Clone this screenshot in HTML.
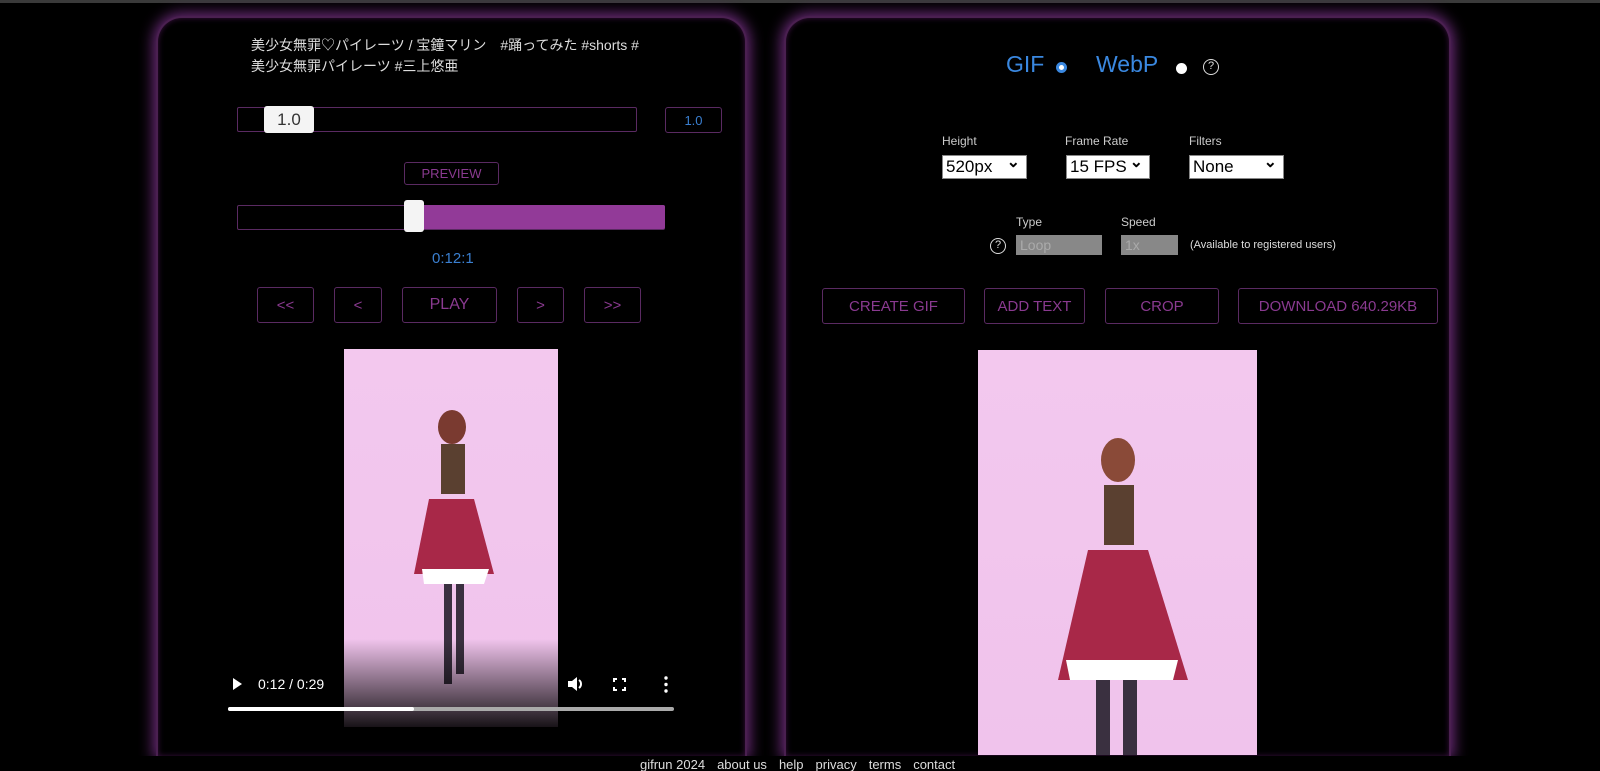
<!DOCTYPE html>
<html style="overflow:hidden;height:771px"><head><meta charset="utf-8"><style>
*{box-sizing:border-box;margin:0;padding:0}
body{width:1600px;height:771px;background:#000;overflow:hidden;position:relative;font-family:"Liberation Sans","Noto Sans CJK JP",sans-serif;color:#ddd}
.top{position:absolute;left:0;top:0;width:1600px;height:3px;background:#3a3a3a}
.panel{position:absolute;top:16px;height:740px;border:2px solid #4a2050;border-bottom:none;border-radius:26px 26px 0 0;box-shadow:0 0 14px 3px #6a2a78,inset 0 0 6px #3a1040;background:#000}
.abs{position:absolute}
.btn{position:absolute;border:1px solid #5a2a62;border-radius:3px;color:#8a3a90;display:flex;align-items:center;justify-content:center;font-size:15px}
.sel{position:absolute;background:#fff;color:#000;border:1px solid #888;font-size:17px;padding-left:3px;line-height:22px;height:24px}
.sel:after{content:"⌄";position:absolute;right:6px;top:-4px;font-size:16px;font-weight:bold}
.lbl{position:absolute;font-size:12px;color:#ccc}
.pink{position:absolute;background:linear-gradient(#f3c8ee,#f0c3ec)}
.foot a{color:#ddd;margin:0 6px;font-size:13px}
</style></head><body>
<div class="top"></div>
<div class="panel" style="left:156px;width:591px"></div>
<div class="panel" style="left:784px;width:667px"></div>

<div class="abs" style="left:251px;top:35px;font-size:14px;line-height:21px;color:#ddd;width:420px">美少女無罪♡パイレーツ / 宝鐘マリン　#踊ってみた #shorts #<br>美少女無罪パイレーツ #三上悠亜</div>
<div class="abs" style="left:237px;top:107px;width:400px;height:25px;border:1px solid #5a2a62;border-radius:2px"></div>
<div class="abs" style="left:264px;top:106px;width:50px;height:27px;background:#f4f4f4;border-radius:3px;color:#333;font-size:17px;text-align:center;line-height:27px">1.0</div>
<div class="btn" style="left:665px;top:107px;width:57px;height:26px;color:#3a7fd0;font-size:13px">1.0</div>
<div class="btn" style="left:404px;top:162px;width:95px;height:23px;font-size:13px">PREVIEW</div>
<div class="abs" style="left:237px;top:205px;width:428px;height:25px;border:1px solid #5a2a62;border-radius:2px"></div>
<div class="abs" style="left:416px;top:205px;width:249px;height:24px;background:#923a98;border-radius:2px"></div>
<div class="abs" style="left:404px;top:200px;width:20px;height:32px;background:#f4f4f4;border-radius:3px"></div>
<div class="abs" style="left:432px;top:250px;color:#3a7fd0;font-size:15px">0:12:1</div>
<div class="btn" style="left:257px;top:287px;width:57px;height:36px">&lt;&lt;</div>
<div class="btn" style="left:334px;top:287px;width:48px;height:36px">&lt;</div>
<div class="btn" style="left:402px;top:287px;width:95px;height:36px;font-size:16px">PLAY</div>
<div class="btn" style="left:517px;top:287px;width:47px;height:36px">&gt;</div>
<div class="btn" style="left:584px;top:287px;width:57px;height:36px">&gt;&gt;</div>

<div class="pink" style="left:344px;top:349px;width:214px;height:378px"></div>
<svg class="abs" style="left:344px;top:349px" width="214" height="378"><defs><linearGradient id="g" x1="0" y1="0" x2="0" y2="1"><stop offset="0" stop-color="#000" stop-opacity="0"/><stop offset="1" stop-color="#000" stop-opacity=".9"/></linearGradient></defs><ellipse cx="108" cy="78" rx="14" ry="17" fill="#7a3a30"/><rect x="97" y="95" width="24" height="50" fill="#5a4030"/><path d="M85 150 L130 150 L150 225 L70 225Z" fill="#a82848"/><path d="M78 220 L145 220 L140 235 L80 235Z" fill="#fff"/><rect x="100" y="235" width="8" height="100" fill="#3a3040"/><rect x="112" y="235" width="8" height="90" fill="#3a3040"/><rect x="0" y="290" width="214" height="88" fill="url(#g)"/></svg>
<div class="abs" style="left:233px;top:678px;width:0;height:0;border-left:9px solid #fff;border-top:6px solid transparent;border-bottom:6px solid transparent"></div>
<div class="abs" style="left:258px;top:676px;color:#fff;font-size:14px">0:12 / 0:29</div>
<svg class="abs" style="left:567px;top:676px" width="18" height="16"><path d="M1 5h4l5-4v14l-5-4H1z" fill="#fff"/><path d="M12 4a5 5 0 0 1 0 8" stroke="#fff" stroke-width="2" fill="none"/></svg>
<svg class="abs" style="left:613px;top:678px" width="13" height="13"><path d="M1 4V1h3M9 1h3v3M12 9v3H9M4 12H1V9" stroke="#fff" stroke-width="2" fill="none"/></svg>
<svg class="abs" style="left:664px;top:676px" width="4" height="17"><circle cx="2" cy="2" r="1.7" fill="#fff"/><circle cx="2" cy="8.5" r="1.7" fill="#fff"/><circle cx="2" cy="15" r="1.7" fill="#fff"/></svg>
<div class="abs" style="left:228px;top:707px;width:446px;height:4px;background:#aaa;border-radius:2px"></div>
<div class="abs" style="left:228px;top:707px;width:186px;height:4px;background:#fff;border-radius:2px"></div>

<div class="abs" style="left:1006px;top:51px;color:#3a88e0;font-size:23px">GIF</div>
<div class="abs" style="left:1056px;top:62px;width:11px;height:11px;border-radius:50%;background:#fff;border:3px solid #3a88e0"></div>
<div class="abs" style="left:1096px;top:51px;color:#3a88e0;font-size:23px">WebP</div>
<div class="abs" style="left:1176px;top:63px;width:11px;height:11px;border-radius:50%;background:#fff"></div>
<div class="abs" style="left:1203px;top:59px;width:16px;height:16px;border-radius:50%;border:1.5px solid #ddd;font-size:11px;text-align:center;line-height:13px;color:#ddd">?</div>

<div class="lbl" style="left:942px;top:134px">Height</div>
<div class="lbl" style="left:1065px;top:134px">Frame Rate</div>
<div class="lbl" style="left:1189px;top:134px">Filters</div>
<div class="sel" style="left:942px;top:155px;width:85px">520px</div>
<div class="sel" style="left:1066px;top:155px;width:84px">15 FPS</div>
<div class="sel" style="left:1189px;top:155px;width:95px">None</div>
<div class="lbl" style="left:1016px;top:215px">Type</div>
<div class="lbl" style="left:1121px;top:215px">Speed</div>
<div class="abs" style="left:990px;top:238px;width:16px;height:16px;border-radius:50%;border:1.5px solid #ddd;font-size:11px;text-align:center;line-height:13px;color:#ddd">?</div>
<div class="abs" style="left:1016px;top:235px;width:86px;height:20px;background:#888;color:#aaa;font-size:14px;padding-left:4px;line-height:20px">Loop</div>
<div class="abs" style="left:1121px;top:235px;width:57px;height:20px;background:#888;color:#aaa;font-size:14px;padding-left:4px;line-height:20px">1x</div>
<div class="abs" style="left:1190px;top:239px;font-size:11px;color:#ddd">(Available to registered users)</div>

<div class="btn" style="left:822px;top:288px;width:143px;height:36px;font-size:15px">CREATE GIF</div>
<div class="btn" style="left:984px;top:288px;width:101px;height:36px;font-size:15px">ADD TEXT</div>
<div class="btn" style="left:1105px;top:288px;width:114px;height:36px;font-size:15px">CROP</div>
<div class="btn" style="left:1238px;top:288px;width:200px;height:36px;font-size:15px">DOWNLOAD 640.29KB</div>

<div class="pink" style="left:978px;top:350px;width:279px;height:405px"></div>
<svg class="abs" style="left:978px;top:350px" width="279" height="405"><ellipse cx="140" cy="110" rx="17" ry="22" fill="#8a4a38"/><rect x="126" y="135" width="30" height="60" fill="#5a4030"/><path d="M110 200 L170 200 L210 330 L80 330Z" fill="#a82848"/><path d="M88 310 L200 310 L195 330 L92 330Z" fill="#fff"/><rect x="118" y="330" width="14" height="75" fill="#3a3040"/><rect x="145" y="330" width="14" height="75" fill="#3a3040"/></svg>

<div class="abs" style="left:0;top:756px;width:1600px;height:15px;background:#000"></div>
<div class="abs foot" style="left:634px;top:757px;font-size:13px;color:#ddd"><a>gifrun 2024</a><a>about us</a><a>help</a><a>privacy</a><a>terms</a><a>contact</a></div>
</body></html>
